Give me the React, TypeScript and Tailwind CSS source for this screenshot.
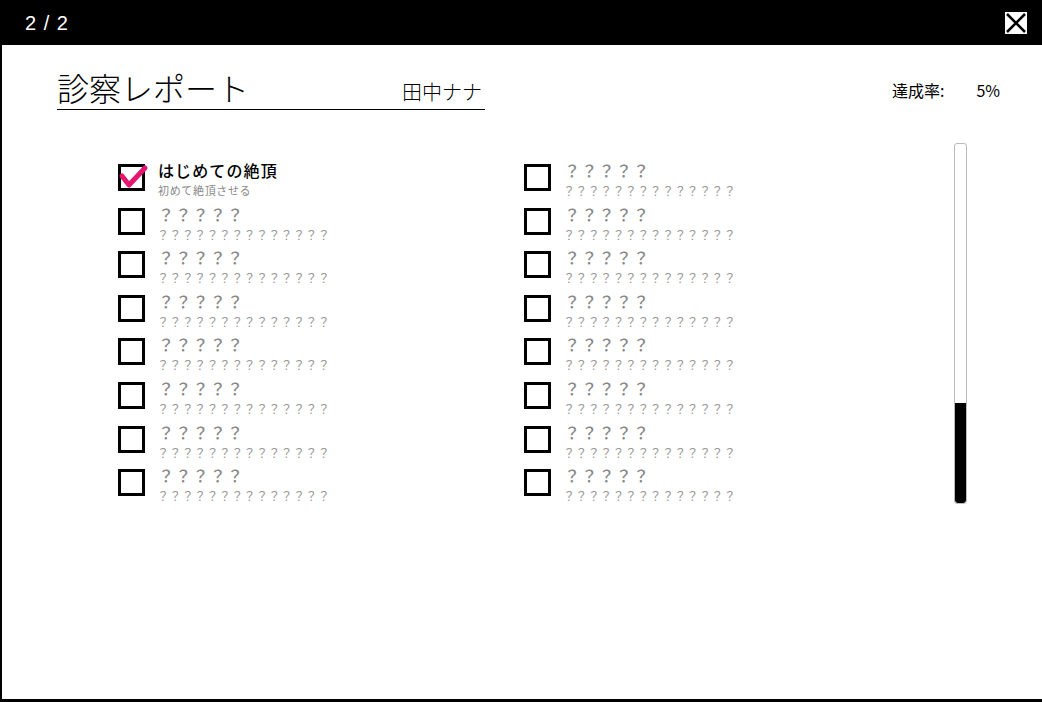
import React from 'react';

interface Item {
  title: string;
  sub: string;
  done: boolean;
}

const jp = { fontFamily: '"Noto Sans CJK JP", "Noto Sans", sans-serif' };

const locked: Item = { title: '？？？？？', sub: '？？？？？？？？？？？？？？', done: false };

const leftItems: Item[] = [
  { title: 'はじめての絶頂', sub: '初めて絶頂させる', done: true },
  ...Array.from({ length: 7 }, () => locked),
];
const rightItems: Item[] = Array.from({ length: 8 }, () => locked);

const CheckBox: React.FC<{ checked: boolean }> = ({ checked }) => (
  <div className="relative w-[27px] h-[27px] shrink-0">
    <div className="w-full h-full border-[3px] border-black bg-white" />
    {checked && (
      <svg className="absolute left-0 top-0" width="32" height="28" viewBox="0 0 32 28">
        <path d="M4 12 L11 21 L27 4" fill="none" stroke="#e5166f" strokeWidth="5" strokeLinecap="round" strokeLinejoin="round" />
      </svg>
    )}
  </div>
);

const Row: React.FC<{ item: Item }> = ({ item }) => (
  <div className="flex items-start h-[43.6px]">
    <CheckBox checked={item.done} />
    <div className="ml-[13px] -mt-[5px] flex flex-col" style={jp}>
      {item.done ? (
        <>
          <span className="text-[16px] leading-[23px] font-medium text-black tracking-[0.07em]">{item.title}</span>
          <span className="text-[11px] leading-[17px] text-[#888] tracking-[0.06em]">{item.sub}</span>
        </>
      ) : (
        <>
          <span className="text-[16px] leading-[23px] font-medium text-[#888] tracking-[0.08em]">{item.title}</span>
          <span className="text-[12px] leading-[17px] text-[#999] tracking-[0.03em] -ml-[1px]">{item.sub}</span>
        </>
      )}
    </div>
  </div>
);

export default function App() {
  return (
    <div className="w-[1042px] h-[702px] flex flex-col bg-white overflow-hidden">
      <div className="h-[45px] shrink-0 bg-black flex items-center justify-between pl-[25px] pr-[15px]">
        <span className="text-white text-[20px] tracking-[0.05em]" style={{ fontFamily: '"Liberation Sans", sans-serif' }}>
          2 / 2
        </span>
        <svg width="22" height="22" viewBox="0 0 22 22">
          <rect x="0" y="0" width="22" height="22" fill="white" />
          <path d="M2 2 L20 20 M20 2 L2 20" stroke="black" strokeWidth="2.5" />
        </svg>
      </div>
      <div className="flex-1 flex flex-col border-l-2 border-b-[3px] border-black">
        <div className="flex items-start justify-between pl-[55px] pr-[42px] pt-[22px]">
          <div className="w-[428px] flex items-end justify-between border-b-[1.5px] border-black pb-[2px]" style={jp}>
            <span className="text-[32px] leading-[40px] font-light text-black">診察レポート</span>
            <span className="text-[20px] leading-[26px] font-light text-black mr-[3px] mb-[2px]">田中ナナ</span>
          </div>
          <div className="flex items-center mt-[11px] text-[16px] text-black" style={jp}>
            <span>達成率:</span>
            <span className="ml-[32px]">5%</span>
          </div>
        </div>
        <div className="flex items-start mt-[33px] pl-[116px]">
          <div className="flex mt-[21px]">
            <div className="w-[406px] flex flex-col">
              {leftItems.map((it, i) => (
                <Row key={i} item={it} />
              ))}
            </div>
            <div className="w-[406px] flex flex-col">
              {rightItems.map((it, i) => (
                <Row key={i} item={it} />
              ))}
            </div>
          </div>
          <div className="ml-[24px] w-[13px] h-[361px] rounded-[3px] border border-[#bbb] bg-white flex flex-col justify-end overflow-hidden">
            <div className="h-[100px] bg-black rounded-b-[3px]" />
          </div>
        </div>
      </div>
    </div>
  );
}
